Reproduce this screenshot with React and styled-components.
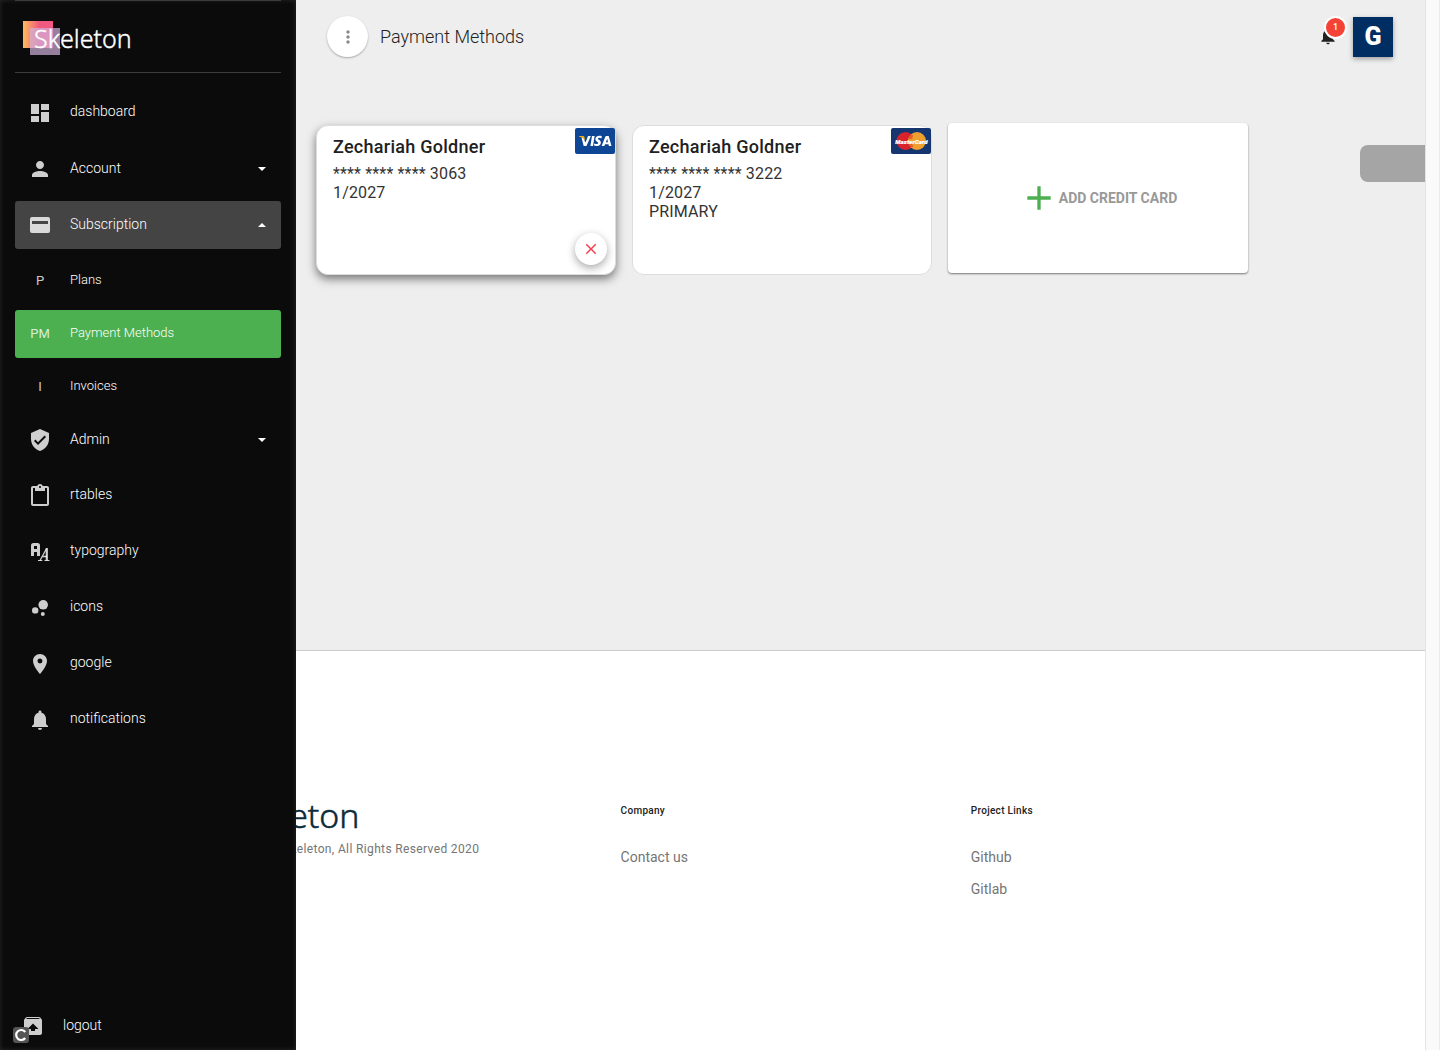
import React from "react";
import styled, { createGlobalStyle, css } from "styled-components";
import {
  MdDashboard,
  MdPerson,
  MdVerifiedUser,
  MdContentPaste,
  MdBubbleChart,
  MdPlace,
  MdNotifications,
  MdUnarchive,
  MdMoreVert,
  MdClose,
  MdAdd,
} from "react-icons/md";

const GlobalStyle = createGlobalStyle`
  *, *::before, *::after { box-sizing: border-box; }
  body {
    margin: 0;
    background: #fff;
    color: #212121;
    font-family: Roboto, "Liberation Sans", sans-serif;
    font-size: 14px;
  }
  button { font: inherit; border: 0; padding: 0; cursor: pointer; }
  a { color: inherit; text-decoration: none; }
  ul { list-style: none; margin: 0; padding: 0; }
  h1, h2, h3, p { margin: 0; }
`;

const Shell = styled.div`
  display: grid;
  grid-template-columns: 296px minmax(0, 1fr) 15px;
  grid-template-rows: 1fr auto;
  min-height: 100vh;
`;

/* Sidebar */
const Sidebar = styled.aside`
  grid-column: 1;
  grid-row: 1 / -1;
  z-index: 2;
  display: flex;
  flex-direction: column;
  padding: 0 15px;
  background: #0b0b0b;
  box-shadow: inset 0 0 5px rgba(255, 255, 255, 0.12);
  color: #fff;
`;

const Brand = styled.a`
  display: flex;
  height: 73px;
  padding: 20px 8px;
  border-top: 1px solid #3c3c3c;
  border-bottom: 1px solid #3c3c3c;
`;

const Logo = styled.svg`
  display: block;
  overflow: visible;
  font-family: "Noto Sans", "Open Sans", sans-serif;
`;

const Nav = styled.nav`
  flex: 1;
  padding-top: 16px;
`;

const NavList = styled.ul`
  display: flex;
  flex-direction: column;
  gap: ${(p) => (p.$nested ? 5 : 8)}px;
  padding: ${(p) => (p.$nested ? "8px 0 0" : "0")};
`;

const NavItem = styled.li`
  margin-bottom: ${(p) => (p.$open ? -3 : 0)}px;
`;

const rowStyle = css`
  display: flex;
  align-items: center;
  width: 100%;
  height: 48px;
  padding: 0 15px;
  border-radius: 3px;
  background: ${(p) => (p.$tone === "active" ? "#4caf50" : p.$tone === "open" ? "#444" : "transparent")};
  color: #fff;
  font-size: ${(p) => (p.$small ? 13 : 14)}px;
  font-weight: 300;
  text-align: left;
`;
const RowLink = styled.a`${rowStyle}`;
const RowButton = styled.button`${rowStyle}`;

const IconSlot = styled.span`
  display: flex;
  flex: none;
  justify-content: center;
  width: 20px;
  margin-right: 20px;
  padding-bottom: ${(p) => (p.$text ? 2 : 0)}px;
  color: rgba(255, 255, 255, 0.8);
  font-weight: 400;
  svg { flex: none; width: 24px; height: 24px; }
`;

const Label = styled.span`
  flex: 1;
  padding-bottom: ${(p) => (p.$raised ? 5 : 3)}px;
  line-height: 20px;
`;

const Caret = styled.span`
  border: 4px solid transparent;
  ${(p) =>
    p.$up
      ? "border-bottom-color: #fff; border-top-width: 0;"
      : "border-top-color: #fff; border-bottom-width: 0;"}
`;

const SidebarFoot = styled.div`
  position: relative;
  margin-left: -7px;
`;

const CornerBadge = styled.span`
  position: absolute;
  left: 5px;
  bottom: 7px;
  display: flex;
  width: 16px;
  height: 16px;
  border-radius: 3px;
  background: #555;
  svg { margin: auto; }
`;

/* Main column */
const Main = styled.main`
  grid-column: 2;
  grid-row: 1;
  min-width: 0;
  background: #eee;
`;

const TopBar = styled.header`
  display: flex;
  align-items: center;
  height: 73px;
  padding: 0 32px 0 31px;
`;

const RoundButton = styled.button`
  display: flex;
  align-items: center;
  justify-content: center;
  width: 41px;
  height: 41px;
  border-radius: 50%;
  background: #fff;
  color: #8a8a8a;
  box-shadow: 0 1px 2px rgba(0, 0, 0, 0.3);
`;

const Title = styled.h1`
  flex: 1;
  margin-left: 12px;
  color: #222;
  font-size: 18px;
  font-weight: 300;
  line-height: 24px;
`;

const BellButton = styled.button`
  position: relative;
  display: flex;
  margin: 0 15px 2px 0;
  background: transparent;
  color: #212121;
`;

const Count = styled.span`
  position: absolute;
  left: 6px;
  top: -10px;
  display: flex;
  align-items: center;
  justify-content: center;
  width: 23px;
  height: 23px;
  padding-bottom: 1px;
  border: 2px solid #fff;
  border-radius: 50%;
  background: #f44336;
  color: #fff;
  font-size: 9px;
  font-weight: 500;
  line-height: 16px;
`;

const Avatar = styled.button`
  width: 40px;
  height: 40px;
  background: #002d62;
  color: #fff;
  font-size: 25px;
  font-weight: 900;
  line-height: 40px;
  box-shadow: 0 2px 5px rgba(0, 0, 0, 0.35);
`;

const Content = styled.section`
  display: flex;
  align-items: flex-start;
  justify-content: space-between;
  padding: 50px 0 50px 20px;
`;

const Cards = styled.div`
  display: flex;
  flex-wrap: wrap;
  align-items: flex-start;
  gap: 16px;
`;

const CreditCard = styled.article`
  position: relative;
  width: 300px;
  height: 150px;
  margin-top: 2px;
  padding: 8px 16px;
  border: 1px solid #ddd;
  border-radius: 12px;
  background: #fff;
  box-shadow: ${(p) => (p.$raised ? "0 4px 10px rgba(0, 0, 0, 0.5)" : "none")};
  color: #333;
  font-size: 16px;
  line-height: 19px;
  letter-spacing: 0.00938em;
`;

const Holder = styled.h2`
  margin-bottom: 4px;
  color: #212121;
  font-size: 18px;
  font-weight: 500;
  line-height: 26px;
  letter-spacing: 0.015em;
`;

const Network = styled.span`
  position: absolute;
  top: 2px;
  right: 0;
  display: flex;
`;

const RemoveButton = styled.button`
  position: absolute;
  right: 8px;
  bottom: 9px;
  display: flex;
  align-items: center;
  justify-content: center;
  width: 32px;
  height: 32px;
  border-radius: 50%;
  background: #fff;
  color: #f44350;
  box-shadow: 0 3px 8px rgba(0, 0, 0, 0.35);
`;

const AddCard = styled.button`
  display: flex;
  align-items: center;
  justify-content: center;
  width: 300px;
  height: 150px;
  border-radius: 4px;
  background: #fff;
  color: #999;
  font-weight: 700;
  box-shadow: 0 1px 2px rgba(0, 0, 0, 0.5);
  svg { color: #4caf50; }
`;

const DrawerTab = styled.button`
  width: 65px;
  height: 37px;
  margin-top: 22px;
  border-radius: 8px 0 0 8px;
  background: #a5a5a5;
`;

/* Footer runs the full width, beneath the sidebar */
const Footer = styled.footer`
  grid-column: 1 / 3;
  grid-row: 2;
  display: grid;
  grid-template-columns: 7fr 6fr 6fr;
  padding: 140px 104px 145px 212px;
  border-top: 1px solid #ccc;
  background: #fff;
  color: #757575;
`;

const FooterColumn = styled.div`
  padding-top: 10px;
`;

const Copyright = styled.p`
  margin-top: 2px;
  font-size: 12px;
  line-height: 20px;
  letter-spacing: 0.03em;
`;

const FooterHeading = styled.h3`
  margin-bottom: 20px;
  color: #212121;
  font-size: 10px;
  font-weight: 500;
  line-height: 20px;
  letter-spacing: 0.03em;
`;

const FooterLink = styled.a`
  display: block;
  line-height: 32px;
`;

const Gutter = styled.div`
  grid-column: 3;
  grid-row: 1 / -1;
  border-left: 1px solid #e4e4e4;
  border-right: 1px solid #ececec;
  background: #fafafa;
`;

function SkeletonLogo({ width, height, color, id }) {
  return (
    <Logo width={width} height={height} viewBox="0 0 110 34" role="img" aria-label="Skeleton">
      <defs>
        <linearGradient id={id} x1="0" x2="1">
          <stop offset="0" stopColor="#fdbb5c" />
          <stop offset="0.55" stopColor="#f0587f" />
          <stop offset="1" stopColor="#f15a86" />
        </linearGradient>
      </defs>
      <rect width="30" height="27" fill={`url(#${id})`} />
      <rect x="7" y="7" width="30" height="27" fill="#d0b0dc" fillOpacity="0.7" />
      <text x="11" y="27" fontSize="25" fontWeight="300" fill={color} stroke={color} strokeWidth="0.4">
        Skeleton
      </text>
    </Logo>
  );
}

const CardIcon = () => (
  <svg viewBox="0 0 24 24" fill="currentColor" fillRule="evenodd">
    <path d="M4 4h16a2 2 0 0 1 2 2v12a2 2 0 0 1-2 2H4a2 2 0 0 1-2-2V6a2 2 0 0 1 2-2zm0 4v3h16V8z" />
  </svg>
);

const TypeIcon = () => (
  <svg viewBox="0 0 24 24" fill="none" stroke="currentColor">
    <path d="M4.500 16V5.500q0-1 1-1h4q1 0 1 1V16M4.500 10.500h6" strokeWidth="3" />
    <path d="M12 20.500 18.300 9M14 16.500h5" strokeWidth="1.300" />
    <path d="M18.800 8v12.500" strokeWidth="2.200" />
    <path d="M10 20.500h4.300M16.500 20.500H21.500" strokeWidth="1.200" />
  </svg>
);

const VisaMark = () => (
  <svg width="40" height="26" viewBox="0 0 40 26" role="img" aria-label="Visa">
    <rect width="40" height="26" rx="2" fill="#0e4595" />
    <path d="M4 8h4.2q1 0 1.2 1l.7 3.3Q8 9.500 4 8.500z" fill="#f2ae14" />
    <g fill="#fff">
      <path d="m8.500 10.500 2 4L13 8h2.800l-4.300 10H8.700L6.500 9.500z" />
      <path d="M17 8h2.600L18 18h-2.600z" />
      <path d="M26.800 8.300 26.400 10.400Q23.200 9.200 23 10.700C23 11.700 26 12 25.900 14.700 25.600 18.100 21.800 18.600 18.900 17.600L19.300 15.400Q23 16.800 23.200 15C23.200 13.900 20.200 13.500 20.400 11 20.600 8 24.200 7.300 26.800 8.300z" />
      <path fillRule="evenodd" d="M31.300 8h2.400L36.500 18h-2.600l-.4-1.700h-3.400L29.300 18h-2.700l3.700-9.300q.3-.7 1-.7zm.9 2.800-1.300 3.500H33z" />
    </g>
  </svg>
);

const MasterMark = () => (
  <svg width="40" height="26" viewBox="0 0 40 26" role="img" aria-label="MasterCard">
    <rect width="40" height="26" rx="2" fill="#16366f" />
    <circle cx="14.500" cy="13" r="9" fill="#d9222a" />
    <circle cx="26" cy="13" r="9" fill="#ee9f2d" />
    <path d="M18.500 8h3.500M17.800 10h3.500M17.800 16h3.500M18.500 18h3.500" stroke="#d9222a" strokeWidth="1" />
    <text
      x="20.500"
      y="15.500"
      textAnchor="middle"
      fill="#fff"
      stroke="#fff"
      strokeWidth="0.2"
      fontFamily="Roboto, sans-serif"
      fontSize="6"
      fontWeight="900"
      fontStyle="italic"
    >
      MasterCard
    </text>
  </svg>
);

const NAV = [
  { label: "dashboard", icon: <MdDashboard /> },
  { label: "Account", icon: <MdPerson />, group: true },
  {
    label: "Subscription",
    icon: <CardIcon />,
    group: true,
    children: [
      { label: "Plans", icon: "P" },
      { label: "Payment Methods", icon: "PM", active: true },
      { label: "Invoices", icon: "I" },
    ],
  },
  { label: "Admin", icon: <MdVerifiedUser />, group: true },
  { label: "rtables", icon: <MdContentPaste /> },
  { label: "typography", icon: <TypeIcon /> },
  { label: "icons", icon: <MdBubbleChart /> },
  { label: "google", icon: <MdPlace /> },
  { label: "notifications", icon: <MdNotifications /> },
];

function NavEntry({ item }) {
  const open = Boolean(item.children);
  return (
    <NavItem $open={open}>
      {item.group ? (
        <RowButton type="button" aria-expanded={open} $tone={open ? "open" : undefined}>
          <IconSlot>{item.icon}</IconSlot>
          <Label>{item.label}</Label>
          <Caret $up={open} />
        </RowButton>
      ) : (
        <RowLink href="#">
          <IconSlot>{item.icon}</IconSlot>
          <Label $raised>{item.label}</Label>
        </RowLink>
      )}
      {open && (
        <NavList $nested>
          {item.children.map((child) => (
            <li key={child.label}>
              <RowLink href="#" $small $tone={child.active ? "active" : undefined}>
                <IconSlot $text>{child.icon}</IconSlot>
                <Label>{child.label}</Label>
              </RowLink>
            </li>
          ))}
        </NavList>
      )}
    </NavItem>
  );
}

export default function App() {
  return (
    <>
      <GlobalStyle />
      <Shell>
        <Sidebar>
          <Brand href="#">
            <SkeletonLogo id="brandTop" width={110} height={34} color="#fff" />
          </Brand>
          <Nav>
            <NavList>
              {NAV.map((item) => (
                <NavEntry key={item.label} item={item} />
              ))}
            </NavList>
          </Nav>
          <SidebarFoot>
            <RowLink href="#">
              <IconSlot><MdUnarchive /></IconSlot>
              <Label>logout</Label>
            </RowLink>
            <CornerBadge>
              <svg width="14" height="14" viewBox="0 0 14 14" fill="none" stroke="#fff" strokeWidth="2.2">
                <path d="M11.200 4A5 5 0 1 0 11.200 10" />
              </svg>
            </CornerBadge>
          </SidebarFoot>
        </Sidebar>

        <Main>
          <TopBar>
            <RoundButton type="button" aria-label="Toggle menu"><MdMoreVert size={20} /></RoundButton>
            <Title>Payment Methods</Title>
            <BellButton type="button" aria-label="Notifications">
              <MdNotifications size={20} />
              <Count>1</Count>
            </BellButton>
            <Avatar type="button">G</Avatar>
          </TopBar>
          <Content>
            <Cards>
              <CreditCard $raised>
                <Holder>Zechariah Goldner</Holder>
                <p>**** **** **** 3063</p>
                <p>1/2027</p>
                <Network><VisaMark /></Network>
                <RemoveButton type="button" aria-label="Remove card"><MdClose size={18} /></RemoveButton>
              </CreditCard>
              <CreditCard>
                <Holder>Zechariah Goldner</Holder>
                <p>**** **** **** 3222</p>
                <p>1/2027</p>
                <p>PRIMARY</p>
                <Network><MasterMark /></Network>
              </CreditCard>
              <AddCard type="button"><MdAdd size={40} />ADD CREDIT CARD</AddCard>
            </Cards>
            <DrawerTab type="button" aria-label="Open settings" />
          </Content>
        </Main>

        <Footer>
          <div>
            <SkeletonLogo id="brandFoot" width={150} height={46} color="#0c2a38" />
            <Copyright>Copyright © Skeleton, All Rights Reserved 2020</Copyright>
          </div>
          <FooterColumn>
            <FooterHeading>Company</FooterHeading>
            <FooterLink href="#">Contact us</FooterLink>
          </FooterColumn>
          <FooterColumn>
            <FooterHeading>Project Links</FooterHeading>
            <FooterLink href="#">Github</FooterLink>
            <FooterLink href="#">Gitlab</FooterLink>
          </FooterColumn>
        </Footer>
        <Gutter />
      </Shell>
    </>
  );
}
